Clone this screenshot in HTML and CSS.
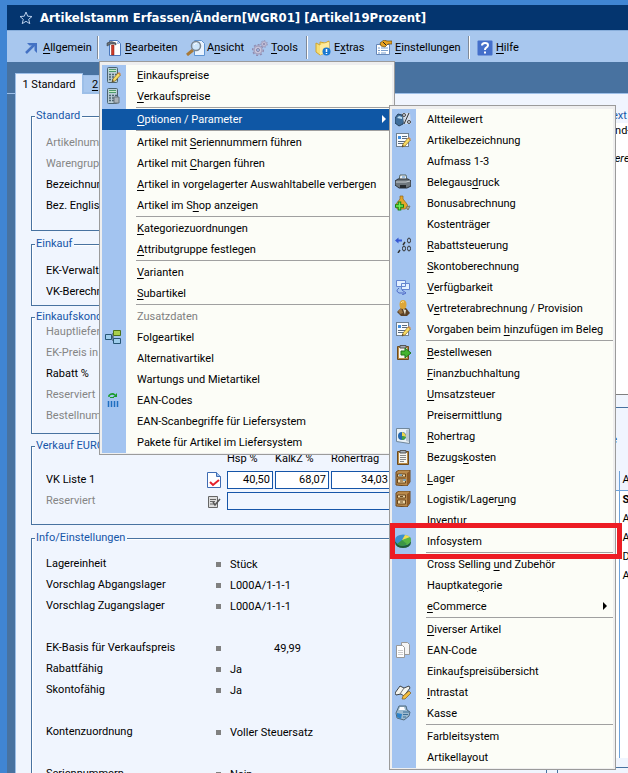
FILE: index.html
```
<!DOCTYPE html>
<html lang="de">
<head>
    <meta charset="utf-8">
    <meta name="viewport" content="width=device-width, initial-scale=1">
    <title>Artikelstamm Erfassen/Ändern</title>
    <link rel="stylesheet" href="styles.css">
</head>
<body>
    <svg class="symbols" aria-hidden="true">
        <symbol id="calc" viewBox="0 0 16 16">
            <rect x="2.5" y=".5" width="10" height="15" rx="1" fill="#b9cdd6" stroke="#4c6470"/>
            <path d="M4 2h7v3H4z" fill="#4f9a6c"/><path d="M4 3.500h7" stroke="#c9efcb"/>
            <path d="M4 7.500h8M4 10h8M4 12.500h8" stroke="#4c6470" stroke-width="1.500" stroke-dasharray="2 1"/>
        </symbol>
        <symbol id="pencil" viewBox="0 0 16 16">
            <path d="M7 15l1-3 5-6 2.500 2-5.500 6z" fill="#f6dc65" stroke="#8a6420" stroke-width=".7"/><path d="M13 6l1-1 2 2-1 1z" fill="#d98a4f"/><path d="M7 15l.5-2 1.500 1z" fill="#333"/>
        </symbol>
        <symbol id="doc" viewBox="0 0 16 16">
            <rect x="1.500" y="1.500" width="12" height="13" fill="#f8fbff" stroke="#708090"/>
            <path d="M3 4h3v3H3z" fill="#3f8ee0"/><path d="M7 4.500h5M7 6.500h5M3 9.500h8M3 11.500h6" stroke="#5a6b80"/>
        </symbol>
        <symbol id="clip" viewBox="0 0 16 16">
            <path d="M2.500 2.500h11v13h-11z" fill="#b98b45" stroke="#6d4a1c"/><path d="M4 4h8v10H4z" fill="#f7f7f2"/><path d="M5 1.500h6V4H5z" fill="#a4adb5" stroke="#555"/>
        </symbol>
        <symbol id="crate" viewBox="0 0 16 16">
            <path d="M1 2l3-2h11v12l-3 4-11-1z" fill="#b98a4c" stroke="#6b471c"/><path d="M12 3v12l3-3V1z" fill="#8c5a27"/>
            <path d="M2.500 4h8v3h-8zM2.500 9h8v4h-8z" fill="#edd5a4" stroke="#6b471c"/><path d="M5 5.500h3M5 11h3" stroke="#6b471c"/>
        </symbol>
    </svg>

    <div class="window">
        <header class="titlebar">
            <svg class="star" viewBox="0 0 14 14"><path d="M7 1l1.700 4.200 4.300.3-3.300 2.800 1.100 4.400L7 10.300l-3.800 2.400 1.100-4.400L1 5.500l4.300-.3z" fill="none" stroke="#b9cfec"/></svg>
            <h1>Artikelstamm Erfassen/Ändern[WGR01] [Artikel19Prozent]</h1>
        </header>

        <nav class="toolbar">
            <button class="tool allgemein"><svg class="icon" viewBox="0 0 16 16"><path d="M2 13l9-9" stroke="#4472c4" stroke-width="2.500"/><path d="M3 3h10v10l-2.500-2.500V5.500h-5z" fill="#4472c4"/></svg><span><u>A</u>llgemein</span></button>
            <i class="divider"></i>
            <button class="tool bearbeiten"><svg class="icon" viewBox="0 0 16 16"><path d="M3.500.5h8l3 3v12h-11z" fill="#fff" stroke="#4a78bd"/><path d="M11 1v3h3" fill="#9fc2ee"/><path d="M1 3q4-3 9 0v2l-2-1H5L1 6z" fill="#667079" stroke="#333" stroke-width=".5"/><path d="M5.500 5h2.500v10H5.500z" fill="#cf3b2a" stroke="#841c10" stroke-width=".5"/></svg><span><u>B</u>earbeiten</span></button>
            <button class="tool ansicht"><svg class="icon wide" viewBox="0 0 20 16"><path d="M8.500.5h7l3 3v12h-10z" fill="#e9f3ff" stroke="#5e94d2"/><path d="M7 10l-6 5" stroke="#a87937" stroke-width="3"/><circle cx="10" cy="6" r="4.500" fill="#cfe7fb" stroke="#7a8793" stroke-width="1.500"/><path d="M8 5q1-2 3-2" stroke="#fff" fill="none"/></svg><span>A<u>n</u>sicht</span></button>
            <button class="tool tools"><svg class="icon" viewBox="0 0 16 16"><circle cx="6" cy="10" r="5.300" fill="none" stroke="#8f8bb0" stroke-width="1.500" stroke-dasharray="2 2"/><circle cx="6" cy="10" r="4" fill="#c9c6dc" stroke="#a5a2c0" stroke-width="1.500"/><circle cx="6" cy="10" r="1.500" fill="#a8c7ee" stroke="#8582a8"/><circle cx="12" cy="4" r="3.300" fill="none" stroke="#8f8bb0" stroke-dasharray="1.500 1.500"/><circle cx="12" cy="4" r="2.500" fill="#c5c2da" stroke="#a5a2c0"/><circle cx="12" cy="4" r="1" fill="#8582a8"/></svg><span><u>T</u>ools</span></button>
            <i class="divider"></i>
            <button class="tool extras"><svg class="icon" viewBox="0 0 16 16"><path d="M1 3l4 2V2l5 1 4-2v10l-9 4-4-3z" fill="#f8df75" stroke="#d1a52c"/><path d="M5 5l9-3v9l-9 4z" fill="#ffeb9c"/><circle cx="11.500" cy="11.500" r="4" fill="#1978d2"/><path d="M11.500 9v3M11.500 13v1" stroke="#fff" stroke-width="1.500"/></svg><span>E<u>x</u>tras</span></button>
            <button class="tool einstellungen"><svg class="icon" viewBox="0 0 16 16"><path d="M.5 4.500h13v10H.5z" fill="#fff" stroke="#6687b8"/><path d="M2 8h2M5 8h7M2 10.500h2M5 10.500h7M2 13h2M5 13h5" stroke="#779dcd"/><path d="M4 3l4-3 3 1h5v3h-4L9 7 5 6z" fill="#e9a21f" stroke="#614817" stroke-width=".7"/><path d="M7 2l3 3" stroke="#222"/></svg><span><u>E</u>instellungen</span></button>
            <i class="divider"></i>
            <button class="tool hilfe"><svg class="icon" viewBox="0 0 16 16"><rect x=".5" y=".5" width="15" height="15" rx="1" fill="#446fca"/><path d="M5 5.500q0-2.500 3-2.500t3 2.300q0 1.500-1.700 2.400Q8 8.500 8 10" stroke="#fff" stroke-width="2" fill="none"/><path d="M7 11.500h2v2H7z" fill="#fff"/></svg><span><u>H</u>ilfe</span></button>

            <ul class="menu">
                <li><button><svg viewBox="0 0 16 16"><use href="#calc"/><use href="#pencil"/></svg><span><u>E</u>inkaufspreise</span></button></li>
                <li><button><svg viewBox="0 0 16 16"><use href="#calc"/><path d="M9 9h5v6H9z" fill="#aab3ba" stroke="#69747c"/></svg><span><u>V</u>erkaufspreise</span></button></li>
                <li class="separator"></li>
                <li class="open">
                    <button class="more"><span><u>O</u>ptionen / Parameter</span></button>
                    <ul class="menu submenu">
                        <li><button><svg viewBox="0 0 16 16"><path d="M0 12V7l3-4 4 1 2 4-1 5-4 2z" fill="#3f6d9a" stroke="#27435f"/><path d="M2 7l2-2 3 1v2z" fill="#b9ddf5"/><path d="M7 2h8l1 11H9z" fill="#e8e8e8" opacity=".7"/><circle cx="9" cy="4" r="1.500" fill="none" stroke="#444"/><circle cx="14" cy="11" r="1.500" fill="none" stroke="#444"/><path d="M14 2L9 13" stroke="#333"/></svg><span>Altteilewert</span></button></li>
                        <li><button><svg viewBox="0 0 16 16"><use href="#doc"/><use href="#pencil"/></svg><span>Artikelbezeichnung</span></button></li>
                        <li><button><span>Aufmass 1-3</span></button></li>
                        <li><button><svg viewBox="0 0 16 16"><path d="M4 6l1-5h6l1 5z" fill="#eef3f8" stroke="#566"/><path d="M7 3h3" stroke="#4b8ccc"/><path d="M0 7l3-2h10l3 2v5l-4 2H4l-4-3z" fill="#6e777d" stroke="#2d3338"/><path d="M1 8h10l4-1" stroke="#c8cfd3" fill="none"/><path d="M5 11h6v3H5z" fill="#252b2f"/></svg><span>Belegaus<u>d</u>ruck</span></button></li>
                        <li><button><svg viewBox="0 0 16 16"><path d="M5 1h3v3l4 5 1 3-3 2H2L1 9l4-5z" fill="#e4a62b" stroke="#8c651d" stroke-width=".7"/><path d="M0 11h9M4.500 6.500v9" stroke="#188314" stroke-width="3.500"/><path d="M1 11h7M4.500 7.500v7" stroke="#72ef54" stroke-width="1.500"/><path d="M11 12l4-1-2 4z" fill="#c6b285" stroke="#776"/></svg><span>Bonusabrechnung</span></button></li>
                        <li><button><span>Kostenträger</span></button></li>
                        <li><button><svg viewBox="0 0 16 16"><path d="M0 3.500L3.500.5v2H7v2H3.500v2z" fill="#3758d3"/><g fill="none" stroke="#333"><ellipse cx="14" cy="3.500" rx="1.500" ry="2.500"/><ellipse cx="9" cy="11.500" rx="1.500" ry="2.500"/><ellipse cx="14" cy="11.500" rx="1.500" ry="2.500"/><path d="M10 5L8 8M5 13l-2 3" stroke-width="1.500"/></g></svg><span><u>R</u>abattsteuerung</span></button></li>
                        <li><button><span><u>S</u>kontoberechnung</span></button></li>
                        <li><button><svg viewBox="0 0 16 16"><path d="M1.500 1.500h9v6h-9zM6.500 4.500h8v6h-8z" fill="#e3efff" stroke="#6485d0"/><path d="M4 9q-4 3 0 5h5M7 11l4 3-4 2" stroke="#4d69c6" fill="none"/></svg><span><u>V</u>erfügbarkeit</span></button></li>
                        <li><button><svg viewBox="0 0 16 16"><path d="M2 12l4-4h5l4 5-3 3H6z" fill="#5a4127"/><path d="M3 11l3-3 2 5-3 1z" fill="#9a7442"/><path d="M8 9l3 1-1 5z" fill="#e7e1cd"/><ellipse cx="8" cy="4.500" rx="3.500" ry="4.500" fill="#dda638"/><path d="M6 3q1-2 3-1" stroke="#ffe69a" fill="none"/></svg><span>V<u>e</u>rtreterabrechnung / Provision</span></button></li>
                        <li><button><svg viewBox="0 0 16 16"><use href="#doc"/><use href="#pencil"/></svg><span>Vorgaben beim <u>h</u>inzufügen im Beleg</span></button></li>
                        <li class="separator"></li>
                        <li><button><svg viewBox="0 0 16 16"><use href="#clip"/><path d="M6 7h4V4l6 5-6 5v-3H6z" fill="#44b52f" stroke="#1e7518"/></svg><span><u>B</u>estellwesen</span></button></li>
                        <li><button><span><u>F</u>inanzbuchhaltung</span></button></li>
                        <li><button><span><u>U</u>msatzsteuer</span></button></li>
                        <li><button><span>Preisermittlung</span></button></li>
                        <li><button><svg viewBox="0 0 16 16"><path d="M1.500.5h13v15l-13-2z" fill="#e9f1f7" stroke="#71879b"/><path d="M11 2l3-1v13l-3-1z" fill="#b9c8d5"/><circle cx="7" cy="8" r="4" fill="#2367af"/><path d="M7 4v4l4 1q0-4-4-5z" fill="#ecd64b"/><path d="M7 8l4 1q-1 3-4 3z" fill="#43a245"/></svg><span><u>R</u>ohertrag</span></button></li>
                        <li><button><svg viewBox="0 0 16 16"><use href="#clip"/><path d="M5 6.500h6M5 8.500h6M5 10.500h6M5 12.500h4" stroke="#888"/></svg><span>Bezugs<u>k</u>osten</span></button></li>
                        <li><button><svg viewBox="0 0 16 16"><use href="#crate"/><path d="M4 4h3v2H4zM8 9h3v2H8z" fill="#7e9eb2"/></svg><span><u>L</u>ager</span></button></li>
                        <li><button><svg viewBox="0 0 16 16"><use href="#crate"/></svg><span>Logistik/Lager<u>u</u>ng</span></button></li>
                        <li><button><span>Inventur</span></button></li>
                        <li class="marked"><button><svg viewBox="0 0 16 16"><ellipse cx="8" cy="9.500" rx="8" ry="5.500" fill="#205c36"/><ellipse cx="8" cy="7" rx="8" ry="5.500" fill="#3c91ce"/><path d="M7 7l8-3q3 5-3 8H7z" fill="#58b643"/><path d="M7 7l8-3Q13 2 10 2z" fill="#f2dc4b"/><path d="M7 7L2 11q5 4 10 0z" fill="#3c9645"/></svg><span>Infosystem</span></button></li>
                        <li class="separator"></li>
                        <li><button><span>Cross Selling <u>u</u>nd Zubehör</span></button></li>
                        <li><button><span>Hauptkate<u>g</u>orie</span></button></li>
                        <li><button class="more"><span><u>e</u>Commerce</span></button></li>
                        <li class="separator"></li>
                        <li><button><span><u>D</u>iverser Artikel</span></button></li>
                        <li><button><svg viewBox="0 0 16 16"><path d="M6.500.5h6l2 2v10h-8z" fill="#f5f5f5" stroke="#999"/><path d="M1.500 3.500h6l2 2v10h-8z" fill="#fff" stroke="#999"/><path d="M3 8.500h5M3 10.500h5M3 12.500h5" stroke="#ccc"/></svg><span>EAN-Code</span></button></li>
                        <li><button><span>Einkau<u>f</u>spreisübersicht</span></button></li>
                        <li><button><svg viewBox="0 0 16 16"><path d="M0 9l5-7 4 2 5-2 1 2-6 8-3-2-5 1z" fill="#f5f5ee" stroke="#3f4448"/><path d="M9 4l-4 6" stroke="#777"/><path d="M7 15l1-3 6-5 2 2-6 6z" fill="#f4be3d" stroke="#7d5a21" stroke-width=".7"/></svg><span><u>I</u>ntrastat</span></button></li>
                        <li><button><svg viewBox="0 0 16 16"><path d="M4 1h7l1 4 3 2-1 4-5 4-7-2-1-5z" fill="#9dbbd0" stroke="#506a7d"/><path d="M5 2h4l1 3H4z" fill="#fff"/><path d="M2 8l5 1-1 5-4-2z" fill="#2d82c7"/><path d="M8 7h6M8 9.500h5M8 12h3" stroke="#3b6e96"/></svg><span>Kasse</span></button></li>
                        <li class="separator"></li>
                        <li><button><span>Farbleitsystem</span></button></li>
                        <li><button><span>Artikellayout</span></button></li>
                    </ul>
                </li>
                <li class="separator"></li>
                <li><button><span>Artikel mit <u>S</u>eriennummern führen</span></button></li>
                <li><button><span>Artikel mit <u>C</u>hargen führen</span></button></li>
                <li><button><span><u>A</u>rtikel in vorgelagerter Auswahltabelle verbergen</span></button></li>
                <li><button><span>Artikel im S<u>h</u>op anzeigen</span></button></li>
                <li class="separator"></li>
                <li><button><span><u>K</u>ategoriezuordnungen</span></button></li>
                <li><button><span><u>A</u>ttributgruppe festlegen</span></button></li>
                <li class="separator"></li>
                <li><button><span><u>V</u>arianten</span></button></li>
                <li><button><span><u>S</u>ubartikel</span></button></li>
                <li class="separator"></li>
                <li><button disabled><span>Zusatzdaten</span></button></li>
                <li><button><svg viewBox="0 0 16 16"><path d="M6 8h2V4h2M8 8v4h2" fill="none" stroke="#345"/><path d="M.5 5.500h6v5h-6zM8.500 9.500h7v5h-7z" fill="#9ecdec" stroke="#275675"/><path d="M8.500 1.500h7v5h-7z" fill="#a9cf4b" stroke="#4c7219"/></svg><span>Folgeartikel</span></button></li>
                <li><button><span>Alternativartikel</span></button></li>
                <li><button><span>Wartungs und Mietartikel</span></button></li>
                <li><button><svg viewBox="0 0 16 16"><path d="M4 5V3.500Q7 .5 10 3" fill="none" stroke="#199b2b" stroke-width="1.500"/><path d="M12 1v4H8z" fill="#199b2b"/><path d="M5 5.500h4" stroke="#199b2b"/><path d="M3.500 9v6M6.500 9v6M9.500 9v6M12.500 9v6" stroke="#1f6ec0" stroke-width="1.500"/></svg><span>EAN-Codes</span></button></li>
                <li><button><span>EAN-Scanbegriffe für Liefersystem</span></button></li>
                <li><button><span>Pakete für Artikel im Liefersystem</span></button></li>
            </ul>
        </nav>

        <div class="tabs">
            <button class="tab active">1 Standard</button>
            <button class="tab"><u>2</u></button>
        </div>

        <main class="panel">
            <form class="left">
                <fieldset class="standard">
                    <legend>Standard</legend>
                    <p class="off">Artikelnummer</p>
                    <p class="off">Warengruppe</p>
                    <p>Bezeichnung</p>
                    <p>Bez. Englisch</p>
                </fieldset>
                <fieldset class="einkauf">
                    <legend>Einkauf</legend>
                    <p>EK-Verwaltung</p>
                    <p>VK-Berechnung</p>
                </fieldset>
                <fieldset class="konditionen">
                    <legend>Einkaufskonditionen</legend>
                    <div class="rows">
                        <p class="off">Hauptlieferant</p>
                        <p class="off">EK-Preis in</p>
                        <p>Rabatt %</p>
                        <p class="off">Reserviert</p>
                        <p class="off">Bestellnummer</p>
                    </div>
                </fieldset>
                <fieldset class="verkauf">
                    <legend>Verkauf EURO</legend>
                    <div class="prices head">
                        <label class="hsp" for="hsp">Hsp %</label>
                        <label for="kalkz">KalkZ %</label>
                        <label for="rohertrag">Rohertrag</label>
                    </div>
                    <div class="prices">
                        <span>VK Liste 1</span>
                        <svg class="mini" viewBox="0 0 14 16"><path d="M.5.500h9l4 4v11H.5z" fill="#fff" stroke="#3f6cb3"/><path d="M9.500.5v4h4" fill="#9fc2ee" stroke="#3f6cb3"/><path d="M3 10l3 3 6-5" fill="none" stroke="#e5202b" stroke-width="2"/></svg>
                        <input id="hsp" type="text" value="40,50">
                        <input id="kalkz" type="text" value="68,07">
                        <input id="rohertrag" type="text" value="34,03">
                    </div>
                    <div class="prices">
                        <label class="off" for="reserviert">Reserviert</label>
                        <svg class="mini" viewBox="0 0 14 16"><path d="M1.500 3.500h9v11h-9z" fill="#ddd" stroke="#666"/><path d="M3 6.500h6M3 8.500h5M3 11h4" stroke="#666"/><path d="M6 9l2 3 5-6" fill="none" stroke="#555" stroke-width="1.500"/></svg>
                        <input id="reserviert" class="long" type="text">
                    </div>
                </fieldset>
                <fieldset class="info">
                    <legend>Info/Einstellungen</legend>
                    <dl>
                        <dt>Lagereinheit</dt><dd>Stück</dd>
                        <dt>Vorschlag Abgangslager</dt><dd>L000A/1-1-1</dd>
                        <dt>Vorschlag Zugangslager</dt><dd>L000A/1-1-1</dd>
                        <dt class="gap">EK-Basis für Verkaufspreis</dt><dd class="gap amount"><span>49,99</span></dd>
                        <dt>Rabattfähig</dt><dd>Ja</dd>
                        <dt>Skontofähig</dt><dd>Ja</dd>
                        <dt class="gap">Kontenzuordnung</dt><dd class="gap">Voller Steuersatz</dd>
                        <dt class="gap">Seriennummern</dt><dd class="gap">Nein</dd>
                    </dl>
                </fieldset>
            </form>

            <section class="right">
                <h2>Artikeltext</h2>
                <div class="note">
                    <p>und-</p>
                    <p><em>andere</em></p>
                </div>
                <div class="details">
                    <b>e</b>
                    <table>
                        <thead><tr><th></th><th>A</th></tr></thead>
                        <tbody>
                            <tr><td></td><td><b>S</b></td></tr>
                            <tr><td></td><td>A</td></tr>
                            <tr><td></td><td>A</td></tr>
                            <tr><td></td><td>D</td></tr>
                            <tr><td></td><td>A</td></tr>
                            <tr class="rest"><td></td><td></td></tr>
                        </tbody>
                    </table>
                </div>
                <div class="footer-box"></div>
            </section>
        </main>
    </div>
</body>
</html>
```

FILE: styles.css
```
* {
    box-sizing: border-box;
}

body {
    margin: 0;
    height: 100vh;
    overflow: hidden;
    background-color: #4085d3;
    font-family: Roboto, Tahoma, sans-serif;
    font-size: 11px;
    color: #000;
}

button, input {
    font: inherit;
    color: inherit;
}

button {
    border: none;
    background: none;
    padding: 0;
}

p, h1, h2, ul, dl, dd {
    margin: 0;
    padding: 0;
}

u {
    text-underline-offset: 2px;
}

.symbols {
    display: none;
}

.window {
    margin: 5px 0 0 7px;
    background-color: #4872a0;
}

.titlebar {
    display: flex;
    align-items: center;
    gap: 7px;
    height: 25px;
    padding-left: 12px;
    background-color: #04356f;
    color: #fff;
}

.titlebar h1 {
    font-family: "DejaVu Sans Condensed", "DejaVu Sans", sans-serif;
    font-size: 13px;
    font-weight: bold;
    white-space: nowrap;
}

.star {
    width: 14px;
    height: 14px;
}

/* toolbar */
.toolbar {
    position: relative;
    display: flex;
    align-items: center;
    height: 32px;
    padding: 2px 0 0 17px;
    border-top: 1px solid #88aedb;
    background-color: #a8c7ee;
}

.tool {
    display: flex;
    align-items: center;
    gap: 3px;
    white-space: nowrap;
}

.icon {
    width: 16px;
    height: 16px;
}

.icon.wide {
    width: 20px;
}

.allgemein { width: 73px; }
.bearbeiten { width: 80px; }
.ansicht { width: 66px; gap: 1px; }
.tools { width: 54px; }
.extras { width: 61px; }
.einstellungen { width: 92px; }

.divider {
    width: 2px;
    height: 23px;
    margin-right: 7px;
    border-left: 1px solid #808a98;
    border-right: 1px solid #fff;
}

/* menus */
.menu {
    position: absolute;
    top: 30px;
    left: 92px;
    z-index: 2;
    width: 296px;
    padding: 3px 2px 1px;
    border: 1px solid #9b9b9b;
    background: linear-gradient(to right, #a3c4f0 24px, #fcfdf7 24px) content-box, #efefef;
    list-style: none;
}

.submenu {
    top: -4px;
    left: 287px;
    z-index: 3;
    width: 227px;
    color: #000;
}

.menu li {
    position: relative;
}

.menu button {
    position: relative;
    display: block;
    width: 100%;
    height: 21px;
    padding: 0 0 1px 35px;
    text-align: left;
    white-space: nowrap;
}

.menu button:disabled {
    color: #808080;
}

.menu svg {
    position: absolute;
    top: 2px;
    left: 3px;
    width: 16px;
    height: 16px;
}

.menu .separator {
    height: 2px;
    margin-left: 34px;
    border-top: 1px solid #a0a0a0;
}

.open > button {
    background-color: #0f57a5;
    color: #fff;
}

.menu .more::after {
    content: "";
    position: absolute;
    top: 6px;
    right: 6px;
    border: 4px solid transparent;
    border-left-color: currentColor;
    border-right: none;
}

.marked::after {
    content: "";
    position: absolute;
    top: -8px;
    right: -9px;
    bottom: -7px;
    left: -2px;
    border: 5px solid #ed1c24;
}

/* tabs and form */
.tabs {
    display: flex;
    align-items: flex-end;
    height: 32px;
    padding-left: 8px;
    border-bottom: 1px solid #9dbfe8;
}

.tab {
    width: 24px;
    height: 18px;
    border: 1px solid #9dbfe8;
    background-color: #a8c7ee;
}

.tab.active {
    width: 68px;
    height: 21px;
    margin-bottom: -1px;
    border-bottom: none;
    background-color: #f0f5fe;
}

.panel {
    display: flex;
    gap: 10px;
    margin-left: 8px;
    padding: 15px 0 0 15px;
    border-left: 1px solid #9dbfe8;
    background-color: #f0f5fe;
}

.left {
    flex: 0 0 516px;
}

fieldset {
    min-width: 0;
    margin: 0 0 6px;
    padding: 10px 14px 0;
    border: 1px solid #4872a0;
    box-shadow: inset 1px 1px 0 #fff;
}

legend {
    margin-left: -11px;
    padding: 0 2px 0 1px;
    line-height: 14px;
    color: #1655a8;
    background-color: #f0f5fe;
}

.left p, dt, dd {
    height: 21px;
    line-height: 20px;
    white-space: nowrap;
}

.off {
    color: #858585;
}

.standard { padding-bottom: 13px; }
.einkauf { padding-bottom: 2px; margin-bottom: 4px; }
.konditionen { padding-top: 0; padding-bottom: 6px; margin-bottom: 5px; }
.konditionen .rows { margin-top: -2px; }
.verkauf { padding-top: 0; padding-bottom: 13px; }
.info { padding-top: 9px; }

.prices {
    display: grid;
    grid-template-columns: 159px 18px 46px 54px 60px 1fr;
    align-items: center;
    column-gap: 2px;
    height: 21px;
}

.prices.head {
    height: 16px;
    line-height: 12px;
    align-items: start;
}

.prices .hsp {
    grid-column: 3;
}

.prices input {
    width: 100%;
    height: 18px;
    padding: 0 2px;
    border: 1px solid #1655a8;
    background-color: #fff;
    text-align: right;
}

.prices .long {
    grid-column: 3 / -1;
    background-color: #f0f5fe;
}

.mini {
    width: 14px;
    height: 16px;
}

.info dl {
    display: grid;
    grid-template-columns: 170px 1fr;
}

.gap {
    margin-top: 21px;
}

dd {
    display: flex;
    align-items: center;
}

dd::before {
    content: "";
    width: 5px;
    height: 5px;
    margin-right: 9px;
    background-color: #808080;
}

.amount span {
    width: 71px;
    text-align: right;
}

/* right column */
.right {
    flex: 1;
    min-width: 0;
    overflow: hidden;
}

.right h2 {
    font-size: 11px;
    font-weight: normal;
    line-height: 14px;
    padding-left: 20px;
    color: #1655a8;
}

.note {
    height: 272px;
    padding-left: 52px;
    border-bottom: 1px solid #808080;
    background-color: #fff;
}

.note p {
    line-height: 15px;
    margin-bottom: 13px;
}

.note em {
    margin-left: -12px;
}

.details {
    margin-top: 12px;
    border-top: 1px solid #4872a0;
    padding-top: 24px;
}

.details > b {
    display: block;
    height: 39px;
    padding-left: 54px;
    line-height: 15px;
    color: #1c3f75;
}

.details table {
    width: 100%;
    border-collapse: collapse;
    table-layout: fixed;
}

.details th, .details td {
    height: 19px;
    padding: 0 0 0 3px;
    text-align: left;
    font-weight: normal;
    line-height: 16px;
}

.details th:first-child {
    width: 62px;
}

.details th + th, .details td + td {
    border-left: 1px solid #6ea2da;
}

.details th {
    border-bottom: 1px solid #6ea2da;
}

.details td {
    background-color: #fff;
}

.details .rest td {
    height: 173px;
}

.footer-box {
    height: 40px;
    margin-top: 9px;
    border-top: 1px solid #4872a0;
    border-left: 1px solid #4872a0;
}
```
